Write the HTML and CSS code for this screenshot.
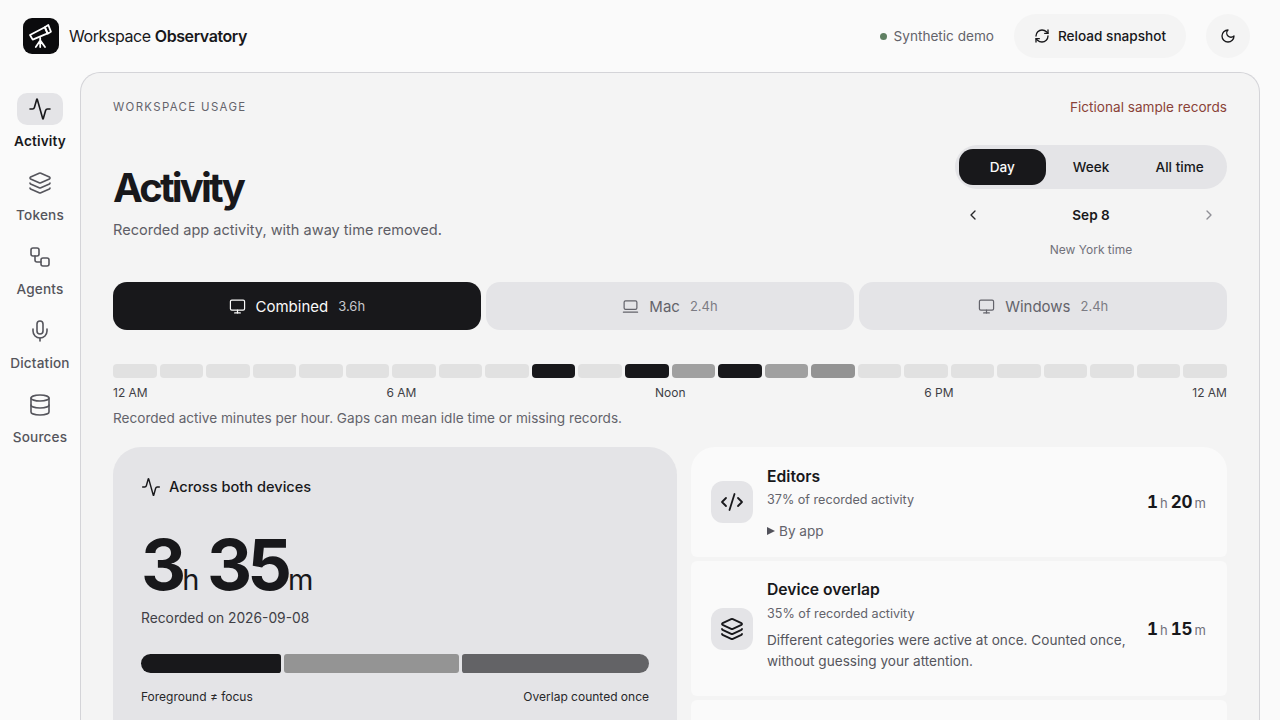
FILE: index.html
```html
<!DOCTYPE html>
<html lang="en">
<head>
<meta charset="utf-8">
<title>Workspace Observatory</title>
<link rel="stylesheet" href="styles.css">
</head>
<body>
<svg class="defs" aria-hidden="true">
  <symbol id="i-telescope" viewBox="0 0 36 36"><path d="M7 17 21.8 9.2 24.6 15.4 9.7 21.6Z"/><path d="M21.8 9.2 25.3 7 27.9 13.7 24.6 15.6Z"/><path d="M17.2 20v2.4M17.2 22.4 12.8 29M17.2 22.4V29M17.2 22.4 22 29"/></symbol>
  <symbol id="i-activity" viewBox="0 0 24 24"><path d="M22 12h-2.48a2 2 0 0 0-1.93 1.46l-2.35 8.36a.25.25 0 0 1-.48 0L9.24 2.18a.25.25 0 0 0-.48 0l-2.35 8.36A2 2 0 0 1 4.49 12H2"/></symbol>
  <symbol id="i-layers" viewBox="0 0 24 24"><path d="M12.83 2.18a2 2 0 0 0-1.66 0L2.6 6.08a1 1 0 0 0 0 1.83l8.58 3.91a2 2 0 0 0 1.66 0l8.58-3.9a1 1 0 0 0 0-1.83z"/><path d="M2 12a1 1 0 0 0 .58.91l8.6 3.91a2 2 0 0 0 1.65 0l8.58-3.9A1 1 0 0 0 22 12"/><path d="M2 17a1 1 0 0 0 .58.91l8.6 3.91a2 2 0 0 0 1.65 0l8.58-3.9A1 1 0 0 0 22 17"/></symbol>
  <symbol id="i-workflow" viewBox="0 0 24 24"><rect width="8" height="8" x="3" y="3" rx="2"/><path d="M7 11v4a2 2 0 0 0 2 2h4"/><rect width="8" height="8" x="13" y="13" rx="2"/></symbol>
  <symbol id="i-mic" viewBox="0 0 24 24"><path d="M12 19v3"/><path d="M19 10v2a7 7 0 0 1-14 0v-2"/><rect x="9" y="2" width="6" height="13" rx="3"/></symbol>
  <symbol id="i-database" viewBox="0 0 24 24"><ellipse cx="12" cy="5" rx="9" ry="3"/><path d="M3 5V19A9 3 0 0 0 21 19V5"/><path d="M3 12A9 3 0 0 0 21 12"/></symbol>
  <symbol id="i-refresh" viewBox="0 0 24 24"><path d="M3 12a9 9 0 0 1 9-9 9.75 9.75 0 0 1 6.74 2.74L21 8"/><path d="M21 3v5h-5"/><path d="M21 12a9 9 0 0 1-9 9 9.75 9.75 0 0 1-6.74-2.74L3 16"/><path d="M8 16H3v5"/></symbol>
  <symbol id="i-moon" viewBox="0 0 24 24"><path d="M12 3a6 6 0 0 0 9 9 9 9 0 1 1-9-9Z"/></symbol>
  <symbol id="i-monitor" viewBox="0 0 24 24"><rect width="20" height="14" x="2" y="3" rx="2"/><path d="M8 21h8"/><path d="M12 17v4"/></symbol>
  <symbol id="i-laptop" viewBox="0 0 24 24"><rect width="18" height="12" x="3" y="4" rx="2"/><path d="M2 20h20"/></symbol>
  <symbol id="i-code" viewBox="0 0 24 24"><path d="m18 16 4-4-4-4"/><path d="m6 8-4 4 4 4"/><path d="m14.5 4-5 16"/></symbol>
  <symbol id="i-left" viewBox="0 0 24 24"><path d="m15 18-6-6 6-6"/></symbol>
  <symbol id="i-right" viewBox="0 0 24 24"><path d="m9 18 6-6-6-6"/></symbol>
</svg>

<header class="topbar">
  <div class="brand">
    <span class="logo"><svg class="icon logo-icon"><use href="#i-telescope"/></svg></span>
    <span class="brand-name">Workspace <strong>Observatory</strong></span>
  </div>
  <div class="top-actions">
    <span class="demo"><span class="dot"></span>Synthetic demo</span>
    <button class="reload"><svg class="icon i16"><use href="#i-refresh"/></svg>Reload snapshot</button>
    <button class="theme"><svg class="icon i16"><use href="#i-moon"/></svg></button>
  </div>
</header>

<div class="shell">
  <nav class="side">
    <a class="nav-item active"><span class="nav-icon"><svg class="icon i24"><use href="#i-activity"/></svg></span><span>Activity</span></a>
    <a class="nav-item"><span class="nav-icon"><svg class="icon i24"><use href="#i-layers"/></svg></span><span>Tokens</span></a>
    <a class="nav-item"><span class="nav-icon"><svg class="icon i24"><use href="#i-workflow"/></svg></span><span>Agents</span></a>
    <a class="nav-item"><span class="nav-icon"><svg class="icon i24"><use href="#i-mic"/></svg></span><span>Dictation</span></a>
    <a class="nav-item"><span class="nav-icon"><svg class="icon i24"><use href="#i-database"/></svg></span><span>Sources</span></a>
  </nav>

  <main class="panel">
    <div class="eyebrow-row">
      <span class="eyebrow">WORKSPACE USAGE</span>
      <span class="fiction">Fictional sample records</span>
    </div>

    <section class="head">
      <div class="head-left">
        <h1>Activity</h1>
        <p class="sub">Recorded app activity, with away time removed.</p>
      </div>
      <div class="head-right">
        <div class="segment">
          <button class="seg on">Day</button>
          <button class="seg">Week</button>
          <button class="seg">All time</button>
        </div>
        <div class="date-nav">
          <svg class="icon i16 chev"><use href="#i-left"/></svg>
          <strong>Sep 8</strong>
          <svg class="icon i16 chev dim"><use href="#i-right"/></svg>
        </div>
        <div class="tz">New York time</div>
      </div>
    </section>

    <div class="tabs">
      <button class="tab on"><svg class="icon i17"><use href="#i-monitor"/></svg><span>Combined</span><small>3.6h</small></button>
      <button class="tab"><svg class="icon i17"><use href="#i-laptop"/></svg><span>Mac</span><small>2.4h</small></button>
      <button class="tab"><svg class="icon i17"><use href="#i-monitor"/></svg><span>Windows</span><small>2.4h</small></button>
    </div>

    <div class="hours">
      <i></i><i></i><i></i><i></i><i></i><i></i><i></i><i></i><i></i><i class="h-full"></i><i></i><i class="h-full"></i>
      <i class="h-mid"></i><i class="h-full"></i><i class="h-mid"></i><i class="h-mid2"></i><i></i><i></i><i></i><i></i><i></i><i></i><i></i><i></i>
    </div>
    <div class="hour-labels"><span>12 AM</span><span>6 AM</span><span>Noon</span><span>6 PM</span><span>12 AM</span></div>
    <p class="note">Recorded active minutes per hour. Gaps can mean idle time or missing records.</p>

    <section class="grid">
      <article class="hero">
        <div class="hero-title"><svg class="icon i20 thin"><use href="#i-activity"/></svg>Across both devices</div>
        <div class="big"><b>3</b><span>h</span><b class="next">35</b><span>m</span></div>
        <div class="recorded">Recorded on 2026-09-08</div>
        <div class="split"><i class="s1"></i><i class="s2"></i><i class="s3"></i></div>
        <div class="split-labels"><span>Foreground ≠ focus</span><span>Overlap counted once</span></div>
      </article>
      <div class="rows">
        <article class="row row-a">
          <span class="row-icon"><svg class="icon i24 thick"><use href="#i-code"/></svg></span>
          <div class="row-body">
            <h3>Editors</h3>
            <p class="pct">37% of recorded activity</p>
            <div class="by"><span class="tri"></span>By app</div>
          </div>
          <div class="dur"><b>1</b><span>h</span><b class="next">20</b><span>m</span></div>
        </article>
        <article class="row row-b">
          <span class="row-icon"><svg class="icon i24 thick"><use href="#i-layers"/></svg></span>
          <div class="row-body">
            <h3>Device overlap</h3>
            <p class="pct">35% of recorded activity</p>
            <p class="desc">Different categories were active at once. Counted once, without guessing your attention.</p>
          </div>
          <div class="dur"><b>1</b><span>h</span><b class="next">15</b><span>m</span></div>
        </article>
        <article class="row row-c"></article>
      </div>
    </section>
  </main>
</div>
</body>
</html>
```
FILE: styles.css
```css
* { box-sizing: border-box; }
html, body { height: 720px; overflow: hidden; }
body {
  margin: 0;
  background: #fafafa;
  color: #18181b;
  font-family: Inter, "Liberation Sans", sans-serif;
  -webkit-font-smoothing: antialiased;
}
.defs { display: none; }
button { font: inherit; border: 0; color: inherit; background: none; padding: 0; }
h1, h3, p { margin: 0; }
.icon { fill: none; stroke: currentColor; stroke-width: 2; stroke-linecap: round; stroke-linejoin: round; flex: none; display: block; }
.i16 { width: 16px; height: 16px; }
.i17 { width: 17px; height: 17px; stroke-width: 1.7; }
.i20 { width: 20px; height: 20px; }
.i24 { width: 24px; height: 24px; stroke-width: 1.6; }
.thin { stroke-width: 1.7; }
.i24.thick { stroke-width: 1.8; }

.topbar { height: 72px; display: flex; align-items: center; justify-content: space-between; padding: 0 30px 0 23px; }
.brand { display: flex; align-items: center; gap: 10px; }
.logo { width: 36px; height: 36px; border-radius: 9px; background: #0b0b0d; color: #fff; display: block; }
.logo-icon { width: 36px; height: 36px; stroke-width: 1.8; }
.brand-name { font-size: 16px; letter-spacing: -0.026em; color: #18181b; }
.brand-name strong { font-weight: 600; }
.top-actions { display: flex; align-items: center; }
.demo { display: flex; align-items: center; gap: 7px; font-size: 13.6px; color: #63636b; margin-right: 20px; }
.dot { width: 7px; height: 7px; border-radius: 50%; background: #5f7f62; }
.reload { height: 44px; width: 172px; border-radius: 22px; background: #f4f4f4; display: flex; align-items: center; justify-content: center; gap: 8px; font-size: 13.6px; font-weight: 500; margin-right: 20px; }
.theme { width: 44px; height: 44px; border-radius: 50%; background: #f4f4f4; display: flex; align-items: center; justify-content: center; }

.shell { display: flex; height: 648px; padding-right: 20px; }
.side { width: 80px; flex: none; padding-top: 21px; display: flex; flex-direction: column; gap: 4px; }
.nav-item { display: flex; flex-direction: column; align-items: center; gap: 6px; font-size: 13.6px; font-weight: 500; color: #55555c; height: 70px; line-height: 20px; letter-spacing: 0.012em; }
.nav-icon { width: 46px; height: 32px; border-radius: 10px; display: flex; align-items: center; justify-content: center; }
.nav-item.active { color: #18181b; font-weight: 600; }
.nav-item.active .nav-icon { background: #e4e4e7; }

.panel { flex: 1; min-width: 0; background: #f4f4f4; border: 1px solid #d4d4d8; border-bottom: 0; border-radius: 20px 20px 0 0; padding: 24px 32px 0; overflow: hidden; }
.eyebrow-row { display: flex; justify-content: space-between; align-items: center; height: 20px; }
.eyebrow { font-size: 11.4px; letter-spacing: 0.12em; color: #63636b; }
.fiction { font-size: 13.6px; color: #8a4238; }

.head { display: flex; justify-content: space-between; margin-top: 28px; height: 124px; }
.head-left { padding-top: 18px; }
h1 { font-size: 40px; line-height: 50px; font-weight: 700; letter-spacing: -0.07em; color: #18181b; }
.sub { font-size: 14.56px; line-height: 22px; color: #5e5e66; margin-top: 6px; }
.head-right { width: 272px; display: flex; flex-direction: column; }
.segment { height: 44px; border-radius: 22px; background: #e4e4e7; padding: 4px; display: grid; grid-template-columns: repeat(3, 1fr); gap: 2px; }
.seg { border-radius: 14px; font-size: 13.6px; font-weight: 500; }
.seg.on { background: #18181b; color: #fafafa; }
.date-nav { display: flex; justify-content: space-between; align-items: center; padding: 0 10px; height: 20px; margin-top: 16px; font-size: 13.6px; }
.date-nav strong { font-weight: 600; }
.chev { color: #27272a; }
.chev.dim { color: #8f8f96; }
.tz { text-align: center; font-size: 12px; color: #71717a; margin-top: 17px; line-height: 16px; }

.tabs { display: flex; gap: 5.6px; margin-top: 13px; }
.tab { flex: 1; height: 48px; border-radius: 14px; background: #e4e4e7; color: #63636b; font-size: 15px; font-weight: 400; display: flex; align-items: center; justify-content: center; gap: 10px; }
.tab small { font-size: 13px; color: #7c7c84; }
.tab.on { background: #18181b; color: #fafafa; }
.tab.on small { color: #c8c8cc; }

.hours { display: grid; grid-template-columns: repeat(24, 1fr); gap: 3px; margin-top: 34px; }
.hours i { height: 14px; border-radius: 4px; background: #e1e1e1; display: block; }
.hours .h-full { background: #18181b; }
.hours .h-mid { background: #a0a0a0; }
.hours .h-mid2 { background: #939393; }
.hour-labels { display: flex; justify-content: space-between; margin-top: 8px; font-size: 12px; line-height: 14px; color: #3f3f46; }
.note { font-size: 13.6px; line-height: 20px; color: #63636b; margin-top: 8px; }

.grid { display: grid; grid-template-columns: 564fr 536fr; gap: 14px; margin-top: 19px; }
.hero { background: #e4e4e7; border-radius: 28px 28px 0 0; height: 273px; padding: 29px 28px 0; }
.hero-title { display: flex; align-items: center; gap: 8px; font-size: 14.6px; font-weight: 500; line-height: 22px; }
.big { margin-top: 36px; font-size: 70px; line-height: 62px; letter-spacing: -0.07em; white-space: nowrap; }
.big b { font-weight: 700; }
.big .next { margin-left: 8px; }
.big span { font-size: 29px; line-height: 1; font-weight: 400; letter-spacing: -0.02em; margin-left: 1px; }
.recorded { font-size: 13.8px; line-height: 20px; color: #3f3f46; margin-top: 12px; }
.split { display: flex; gap: 3px; margin-top: 26px; height: 19px; }
.split i { display: block; height: 100%; border-radius: 3px; }
.split .s1 { width: 140px; background: #18181b; border-radius: 10px 3px 3px 10px; }
.split .s2 { width: 175px; background: #949494; }
.split .s3 { flex: 1; background: #636366; border-radius: 3px 10px 10px 3px; }
.split-labels { display: flex; justify-content: space-between; margin-top: 16px; font-size: 12px; line-height: 16px; color: #27272a; }

.rows { display: flex; flex-direction: column; gap: 4px; }
.row { background: #fafafa; border-radius: 6px; display: flex; align-items: center; gap: 14px; padding: 0 21px 0 20px; }
.row-a { height: 110px; border-radius: 24px 24px 6px 6px; }
.row-b { height: 135px; }
.row-c { height: 100px; }
.row-icon { width: 42px; height: 42px; border-radius: 12px; background: #e4e4e7; display: flex; align-items: center; justify-content: center; flex: none; }
.row-body { flex: 1; min-width: 0; align-self: flex-start; padding-top: 19px; }
.row-b .row-body { padding-top: 18px; }
h3 { font-size: 15.7px; line-height: 22px; font-weight: 600; }
.pct { font-size: 12.6px; line-height: 18px; color: #63636b; margin-top: 4px; }
.row-a .pct { margin-top: 3px; }
.by { display: flex; align-items: center; gap: 4px; font-size: 13.6px; line-height: 20px; color: #63636b; margin-top: 12px; }
.tri { width: 0; height: 0; border-left: 8px solid #52525b; border-top: 4.5px solid transparent; border-bottom: 4.5px solid transparent; }
.desc { font-size: 13.6px; line-height: 21px; color: #55555c; margin-top: 7px; }
.dur { white-space: nowrap; font-size: 17px; align-self: center; font-variant-numeric: tabular-nums; }
.dur b { font-weight: 700; }
.dur .next { margin-left: 3px; }
.dur span { font-size: 13px; font-weight: 400; color: #71717a; margin-left: 2px; }
```
